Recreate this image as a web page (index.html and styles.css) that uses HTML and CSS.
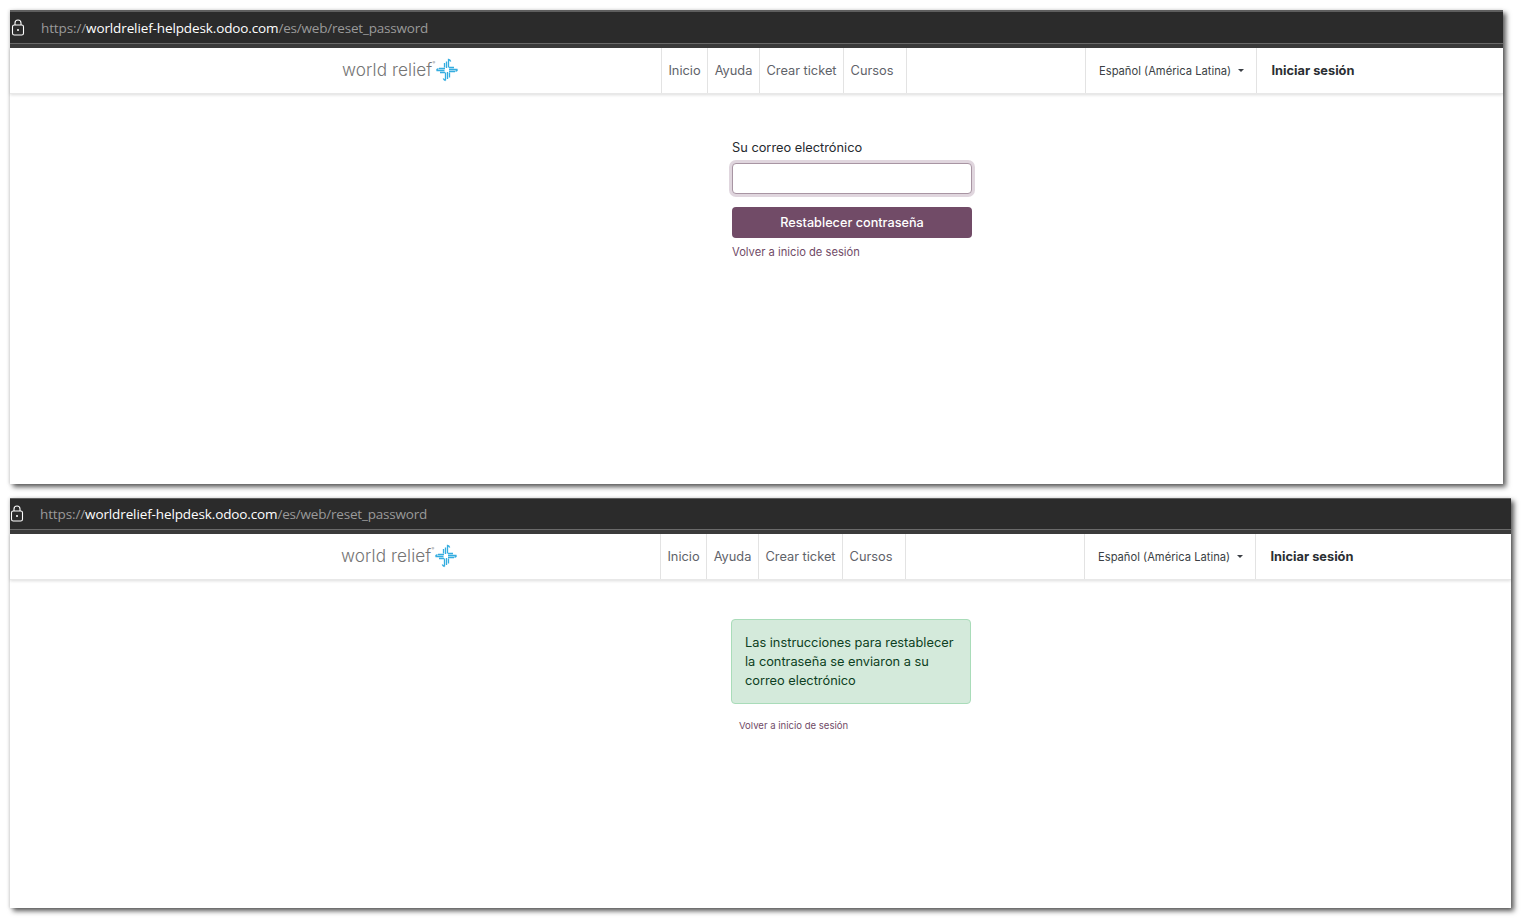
FILE: index.html
```html
<!DOCTYPE html>
<html lang="es">
<head>
<meta charset="utf-8">
<title>Restablecer contraseña</title>
<link rel="stylesheet" href="styles.css">
</head>
<body>
<section class="shot shot-one">
  <div class="urlbar">
    <svg class="lock" width="14" height="17" viewBox="0 0 14 17"><path d="M4 6V4a3 3 0 0 1 6 0v2" fill="none" stroke="#fff" stroke-width="1.1"/><rect x="1.5" y="6" width="11" height="10" rx="1.8" fill="none" stroke="#fff" stroke-width="1.1"/><circle cx="7" cy="11" r="1" fill="#fff"/></svg>
    <div class="url"><span class="dim">https://</span><span class="host">worldrelief-helpdesk.odoo.com</span><span class="dim path">/es/web/reset_password</span></div>
  </div>
  <nav class="nav">
    <div class="brand"><span class="brand-text">world relief</span><span class="reg">®</span>
      <svg class="brand-mark" width="24" height="24" viewBox="0 0 24 24"><g fill="none" stroke="#35ade0" stroke-width="1.3"><path d="M9.500 9.500V5M11.500 10V3.500M13.500 9.500V1.500c1.200.3 1.800 1 2.200 2"/><path d="M10.500 22.500V14.500M12.500 14v7M14.500 14.500v5M10.500 22.500c-1.200-.3-1.800-1-2.200-2"/><path d="M1.500 12.500h8M4 10.500h6M5 14.500h5M1.500 12.500c.3-1 1-1.500 2-1.800"/><path d="M14 9.500h5M14 11.500h8.500M14 13.500h6M22.500 11.500c-.3 1-1 1.500-2 1.800"/></g></svg>
    </div>
    <a class="item item-inicio">Inicio</a>
    <a class="item item-ayuda">Ayuda</a>
    <a class="item item-ticket">Crear ticket</a>
    <a class="item item-cursos">Cursos</a>
    <div class="spacer"></div>
    <div class="lang">Español (América Latina)<span class="caret"></span></div>
    <a class="signin">Iniciar sesión</a>
  </nav>
  <main class="content form-content">
    <div class="card">
      <label class="label" for="mail">Su correo electrónico</label>
      <input class="input" id="mail" type="text">
      <button class="btn" type="button">Restablecer contraseña</button>
      <a class="back">Volver a inicio de sesión</a>
    </div>
  </main>
</section>

<section class="shot shot-two">
  <div class="urlbar">
    <svg class="lock" width="14" height="17" viewBox="0 0 14 17"><path d="M4 6V4a3 3 0 0 1 6 0v2" fill="none" stroke="#fff" stroke-width="1.1"/><rect x="1.5" y="6" width="11" height="10" rx="1.8" fill="none" stroke="#fff" stroke-width="1.1"/><circle cx="7" cy="11" r="1" fill="#fff"/></svg>
    <div class="url"><span class="dim">https://</span><span class="host">worldrelief-helpdesk.odoo.com</span><span class="dim path">/es/web/reset_password</span></div>
  </div>
  <nav class="nav">
    <div class="brand"><span class="brand-text">world relief</span><span class="reg">®</span>
      <svg class="brand-mark" width="24" height="24" viewBox="0 0 24 24"><g fill="none" stroke="#35ade0" stroke-width="1.3"><path d="M9.500 9.500V5M11.500 10V3.500M13.500 9.500V1.500c1.200.3 1.800 1 2.200 2"/><path d="M10.500 22.500V14.500M12.500 14v7M14.500 14.500v5M10.500 22.500c-1.200-.3-1.800-1-2.200-2"/><path d="M1.500 12.500h8M4 10.500h6M5 14.500h5M1.500 12.500c.3-1 1-1.500 2-1.800"/><path d="M14 9.500h5M14 11.500h8.500M14 13.500h6M22.500 11.500c-.3 1-1 1.500-2 1.800"/></g></svg>
    </div>
    <a class="item item-inicio">Inicio</a>
    <a class="item item-ayuda">Ayuda</a>
    <a class="item item-ticket">Crear ticket</a>
    <a class="item item-cursos">Cursos</a>
    <div class="spacer"></div>
    <div class="lang">Español (América Latina)<span class="caret"></span></div>
    <a class="signin">Iniciar sesión</a>
  </nav>
  <main class="content alert-content">
    <div class="card">
      <div class="alert">Las instrucciones para restablecer la contraseña se enviaron a su correo electrónico</div>
      <a class="back-small">Volver a inicio de sesión</a>
    </div>
  </main>
</section>
</body>
</html>
```
FILE: styles.css
```css
* { box-sizing: border-box; }
html, body { margin: 0; height: 100%; overflow: hidden; background: #fff; }
body { padding: 10px 0 0 10px; font-family: Inter, "Liberation Sans", sans-serif; color: #212529; }
.shot { background: #fff; box-shadow: 3px 3px 5px rgba(0,0,0,.65), -1px 0 3px rgba(0,0,0,.12); display: flex; flex-direction: column; }
.shot-one { width: 1493px; height: 474px; }
.shot-two { width: 1501px; height: 410px; margin-top: 14px; }

.urlbar { height: 38px; background: #2b2b2b; border-top: 2px solid #5e5e5e; display: flex; position: relative; flex: none; }
.urlbar::after { content: ""; position: absolute; left: 0; right: 0; top: 31px; height: 1px; background: #6a6a6a; }
.urlbar::before { content: ""; position: absolute; left: 0; right: 0; top: 32px; height: 4px; background: #3a3a3a; }
.lock { margin: 7px 0 0 1px; flex: none; }
.url { margin: 6px 0 0 16px; font: 13.5px/20px "Open Sans", sans-serif; letter-spacing: -.12px; }
.dim { color: #9a9a9a; }
.host { color: #fff; }
.path { letter-spacing: -.2px; }

.shot-two .urlbar { height: 36px; border-top-width: 1px; }
.shot-two .urlbar::after { top: 30px; }
.shot-two .urlbar::before { top: 31px; }
.shot-two .lock { margin: 6px 0 0 0; }
.shot-two .url { margin: 5px 0 0 16px; }

.nav { height: 46px; flex: none; display: flex; align-items: stretch; border-bottom: 1px solid #e8e8e8; box-shadow: 0 1px 3px rgba(0,0,0,.14); font-size: 12.8px; color: #5f636a; }
.brand { width: 651px; padding: 0 0 2px 331px; display: flex; align-items: center; border-right: 1px solid #e3e3e3; flex: none; }
.shot-one .brand { width: 652px; padding-left: 332px; }
.brand-text { font: 300 17.2px/22px Inter, sans-serif; color: #757575; letter-spacing: .1px; white-space: nowrap; }
.reg { width: 3px; margin-bottom: 13px; font-size: 4px; line-height: 4px; color: #757575; }
.brand-mark { margin: 0; flex: none; }
.item { display: flex; align-items: center; justify-content: center; border-right: 1px solid #e3e3e3; flex: none; }
.item-inicio { width: 46px; }
.item-ayuda { width: 52px; }
.item-ticket { width: 84px; }
.item-cursos { width: 63px; padding-right: 6px; }
.spacer { width: 179px; border-right: 1px solid #e3e3e3; flex: none; }
.lang { width: 171px; padding-left: 13px; display: flex; align-items: center; border-right: 1px solid #e3e3e3; font-size: 11.2px; color: #3b3f45; flex: none; }
.caret { margin-left: 7px; border-top: 3.5px solid #3b3f45; border-left: 3px solid transparent; border-right: 3px solid transparent; }
.signin { padding-left: 14.5px; display: flex; align-items: center; font-weight: 700; font-size: 12.8px; color: #2b2f33; }

.content { flex: 1; }
.form-content { padding: 46px 0 0 722px; }
.alert-content { padding: 39px 0 0 721px; }
.card { width: 240px; }

.label { display: block; font-size: 12.8px; line-height: 16px; color: #262a2f; }
.input { display: block; width: 240px; height: 31px; margin-top: 7px; background: #fff; border: 1px solid #a895a3; border-radius: 4px; box-shadow: 0 0 0 3px #e0d6de; outline: none; }
.btn { display: block; width: 240px; height: 31px; margin-top: 13px; background: #714b67; color: #fff; border: 0; border-radius: 4px; font: 500 12.7px/31px Inter, sans-serif; padding: 0; }
.back { display: block; margin-top: 7px; font-size: 11.2px; line-height: 14px; color: #714b67; }

.alert { height: 85px; padding: 13px 13px 0; background: #d4eadb; border: 1px solid #a9dcb9; border-radius: 4px; font-size: 12.8px; line-height: 19px; color: #0d3f22; }
.back-small { display: block; margin: 15px 0 0 8px; font-size: 9.55px; line-height: 14px; color: #714b67; }
```
